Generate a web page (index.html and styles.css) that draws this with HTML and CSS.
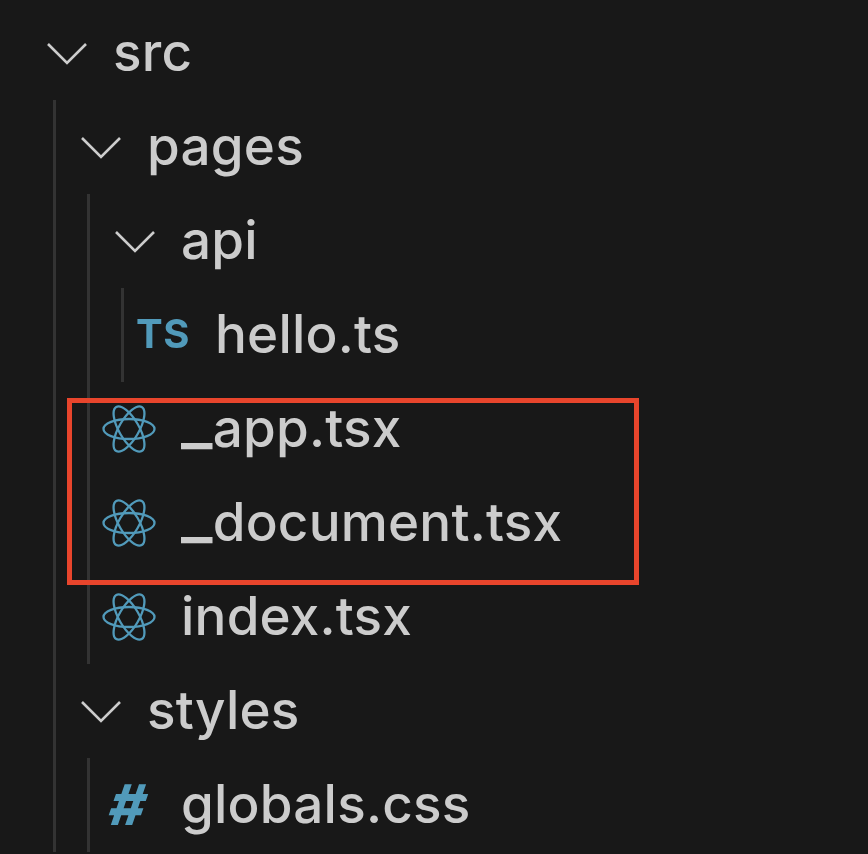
FILE: index.html
```html
<!DOCTYPE html>
<html lang="en">
<head>
<meta charset="utf-8">
<title>Explorer</title>
<link rel="stylesheet" href="styles.css">
</head>
<body>
<svg class="defs" width="0" height="0" aria-hidden="true">
  <symbol id="chevron" viewBox="0 0 42 24"><polyline points="2,2 21,21 40,2"/></symbol>
  <symbol id="react" viewBox="0 0 54 48">
    <ellipse cx="27" cy="24" rx="25.5" ry="10"/>
    <ellipse cx="27" cy="24" rx="25.5" ry="10" transform="rotate(60 27 24)"/>
    <ellipse cx="27" cy="24" rx="25.5" ry="10" transform="rotate(-60 27 24)"/>
  </symbol>
</svg>
<main class="tree">
  <div class="row"><svg class="chevron"><use href="#chevron"/></svg><span class="label">src</span></div>
  <div class="group">
    <div class="row"><svg class="chevron"><use href="#chevron"/></svg><span class="label">pages</span></div>
    <div class="group">
      <div class="row"><svg class="chevron"><use href="#chevron"/></svg><span class="label">api</span></div>
      <div class="group">
        <div class="row"><span class="ts">TS</span><span class="label">hello.ts</span></div>
      </div>
      <div class="row"><svg class="react"><use href="#react"/></svg><span class="label"><span class="underscore">_</span>app.tsx</span></div>
      <div class="row"><svg class="react"><use href="#react"/></svg><span class="label"><span class="underscore">_</span>document.tsx</span></div>
      <div class="row"><svg class="react"><use href="#react"/></svg><span class="label">index.tsx</span></div>
    </div>
    <div class="row"><svg class="chevron"><use href="#chevron"/></svg><span class="label">styles</span></div>
    <div class="group">
      <div class="row"><span class="hash">#</span><span class="label">globals.css</span></div>
    </div>
  </div>
</main>
<div class="highlight"></div>
</body>
</html>
```
FILE: styles.css
```css
html, body {
  margin: 0;
  height: 100%;
  background: #181818;
  overflow: hidden;
}

.defs {
  position: absolute;
}

.tree {
  padding: 6px 0 0 22px;
  font-family: Inter, "Liberation Sans", sans-serif;
  font-size: 53px;
  font-weight: 450;
  letter-spacing: 0.2px;
  color: #cccccc;
  filter: blur(0.6px);
}

.row {
  position: relative;
  height: 94px;
  padding-left: 91px;
  display: flex;
  align-items: center;
  box-sizing: border-box;
  white-space: nowrap;
}

.tree > .group {
  margin-left: 31px;
}

.group {
  margin-left: 31px;
  border-left: 3px solid #333333;
}

.label {
  line-height: 1;
  position: relative;
  top: -1px;
}

.underscore {
  font-size: 68px;
  line-height: 0;
  position: relative;
  top: -4px;
}

.chevron {
  position: absolute;
  left: 24px;
  top: 36px;
  width: 42px;
  height: 24px;
  fill: none;
  stroke: #cccccc;
  stroke-width: 2.6;
}

.react {
  position: absolute;
  left: 12px;
  top: 23px;
  width: 54px;
  height: 48px;
  fill: none;
  stroke: #519aba;
  stroke-width: 2.3;
}

.ts {
  position: absolute;
  left: 12px;
  top: 23px;
  font-size: 40px;
  font-weight: 700;
  letter-spacing: 0.5px;
  line-height: 46px;
  color: #519aba;
}

.hash {
  position: absolute;
  left: 20px;
  top: 18px;
  font-size: 56px;
  font-weight: 800;
  line-height: 58px;
  color: #519aba;
  transform: skewX(-10deg);
}

.highlight {
  position: absolute;
  left: 67px;
  top: 398px;
  width: 572px;
  height: 187px;
  box-sizing: border-box;
  border: 5px solid #e8452c;
}
```
